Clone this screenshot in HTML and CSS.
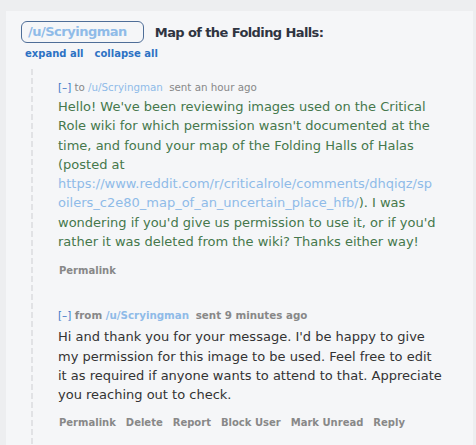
FILE: index.html
```html
<!DOCTYPE html>
<html>
<head>
<meta charset="utf-8">
<link rel="stylesheet" href="styles.css">
</head>
<body>
<div class="panel">
  <div class="title-row">
    <span class="pill">/u/Scryingman</span>
    <span class="title">Map of the Folding Halls:</span>
  </div>
  <div class="toggles"><a>expand all</a><a>collapse all</a></div>
  <div class="thread">
    <div class="msg first">
      <div class="head"><span class="tog">[–]</span> to <a class="user">/u/Scryingman</a> <span class="time">sent an hour ago</span></div>
      <div class="body green">Hello! We've been reviewing images used on the Critical Role wiki for which permission wasn't documented at the time, and found your map of the Folding Halls of Halas (posted at <a class="link">https://www.reddit.com/r/criticalrole/comments/dhqiqz/sp<br>oilers_c2e80_map_of_an_uncertain_place_hfb/</a>). I was wondering if you'd give us permission to use it, or if you'd rather it was deleted from the wiki? Thanks either way!</div>
      <div class="actions"><a>Permalink</a></div>
    </div>
    <div class="msg second">
      <div class="head bold"><span class="tog">[–]</span> from <a class="user">/u/Scryingman</a> <span class="time">sent 9 minutes ago</span></div>
      <div class="body">Hi and thank you for your message. I'd be happy to give my permission for this image to be used. Feel free to edit it as required if anyone wants to attend to that. Appreciate you reaching out to check.</div>
      <div class="actions"><a>Permalink</a><a>Delete</a><a>Report</a><a>Block User</a><a>Mark Unread</a><a>Reply</a></div>
    </div>
  </div>
</div>
</body>
</html>
```

FILE: styles.css
```css
html, body {
  margin: 0;
  padding: 0;
  background: #edeef0;
  font-family: "DejaVu Sans", Verdana, sans-serif;
  height: 100%;
  overflow: hidden;
}
.panel {
  margin: 11px 3px 0 6px;
  background: #f5f6f8;
  padding: 10px 15px 0 15px;
  height: calc(100vh - 11px);
  box-sizing: border-box;
  overflow: hidden;
}
.title-row {
  display: flex;
  align-items: center;
  gap: 11px;
}
.pill {
  display: inline-block;
  border: 1px solid #4f6e98;
  border-radius: 6px;
  color: #8fbbe8;
  font-weight: bold;
  font-size: 13px;
  letter-spacing: -0.5px;
  line-height: 20px;
  padding: 0 16px 0 6px;
}
.title {
  font-weight: bold;
  font-size: 13px;
  letter-spacing: -0.6px;
  color: #2f3441;
}
.toggles {
  margin-top: 4px;
  padding-left: 4px;
  display: flex;
  gap: 11px;
  font-size: 10px;
  font-weight: bold;
  color: #2d72c4;
  line-height: 14px;
}
.thread {
  margin-left: 10px;
  margin-top: 8px;
  padding-left: 27px;
  background: repeating-linear-gradient(to bottom, #e1e2e5 0 6px, transparent 6px 9px) no-repeat 0 0 / 2px 100%;
  padding-bottom: 40px;
}
.first {
  padding-top: 11px;
}
.second {
  padding-top: 30px;
}
.head {
  font-size: 10.3px;
  color: #888;
  line-height: 14px;
}
.head.bold {
  font-weight: bold;
}
.tog {
  color: #3a76c8;
  font-weight: normal;
}
.user {
  color: #8fbbe8;
  margin-right: 3px;
}
.body {
  font-size: 13px;
  line-height: 19.3px;
  color: #333;
  margin-top: 3px;
  width: 384px;
}
.body.green {
  color: #45784c;
  width: 394px;
}
.second .body {
  margin-top: 5px;
}
.link {
  color: #8fbbe8;
}
.actions {
  display: flex;
  gap: 10px;
  font-size: 10px;
  font-weight: bold;
  color: #888;
  margin-top: 13px;
  line-height: 14px;
  padding-left: 1px;
}
.second .actions {
  margin-top: 11px;
}
```
